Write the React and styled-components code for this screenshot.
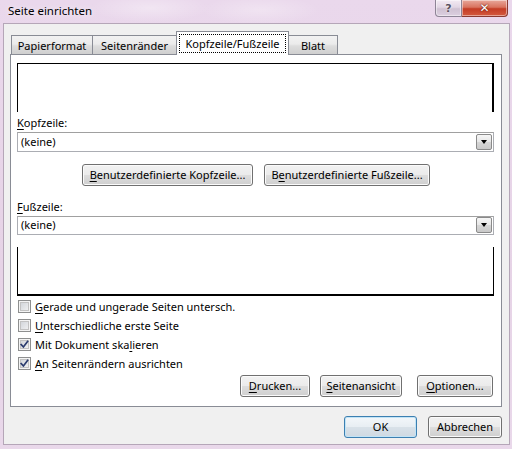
import React from "react";
import styled, { createGlobalStyle } from "styled-components";

const Global = createGlobalStyle`
  html, body { margin: 0; padding: 0; }
  body {
    width: 512px;
    height: 449px;
    overflow: hidden;
    font-family: "Noto Sans", "Open Sans", sans-serif;
    font-size: 11px;
    color: #000;
    background: #e9d7ea;
  }
`;

const Window = styled.div`
  width: 512px;
  height: 449px;
  box-sizing: border-box;
  display: flex;
  flex-direction: column;
  padding: 0 2px 4px 3px;
  background:
    radial-gradient(ellipse 60px 14px at 150px 8px, rgba(255,255,255,0.35), transparent),
    radial-gradient(ellipse 60px 14px at 260px 10px, rgba(255,255,255,0.3), transparent),
    linear-gradient(to bottom, #ead8ec 0%, #e6d3e6 60%, #e9d8ea 100%);
`;

const TitleBar = styled.div`
  height: 23px;
  display: flex;
  align-items: flex-start;
  justify-content: space-between;
  flex-shrink: 0;
`;

const Title = styled.div`
  font-size: 11.5px;
  padding: 2px 0 0 5px;
  line-height: 17px;
  color: #000;
  text-shadow: 0 0 6px rgba(255,255,255,0.9);
`;

const CaptionButtons = styled.div`
  display: flex;
  margin-right: 2px;
`;

const CaptionBtn = styled.div`
  width: ${(p) => p.$w}px;
  height: 17px;
  box-sizing: border-box;
  display: flex;
  align-items: center;
  justify-content: center;
  border: 1px solid ${(p) => (p.$close ? "#8a3a32" : "#8e8496")};
  border-top: none;
  border-left: ${(p) => (p.$close ? "none" : undefined)};
  border-radius: ${(p) => (p.$close ? "0 0 4px 0" : "0 0 0 4px")};
  background: ${(p) =>
    p.$close
      ? "linear-gradient(to bottom, #e8a89b 0%, #d9735f 45%, #c43c25 55%, #d45a3f 100%)"
      : "linear-gradient(to bottom, #f3eaf3 0%, #e2d6e4 45%, #cfc1d2 55%, #dccfe0 100%)"};
  box-shadow: inset 0 0 0 1px rgba(255,255,255,0.45);
  color: ${(p) => (p.$close ? "#fff" : "#5a5160")};
  font-family: "DejaVu Sans", sans-serif;
  font-weight: bold;
  font-size: ${(p) => (p.$close ? "12px" : "11px")};
  text-shadow: ${(p) => (p.$close ? "0 0 2px #6b1a10, 0 0 1px #6b1a10" : "0 0 2px #fff")};
`;

const Client = styled.div`
  flex: 1;
  box-sizing: border-box;
  border: 1px solid #b5a6b8;
  background: #f0f0f0;
  padding: 7px 7px 0 6px;
  display: flex;
  flex-direction: column;
`;

const TabStrip = styled.div`
  height: 23px;
  display: flex;
  align-items: flex-end;
  padding-left: 1px;
`;

const Tab = styled.div`
  width: ${(p) => p.$w}px;
  box-sizing: border-box;
  height: ${(p) => (p.$active ? 24 : 19)}px;
  margin-bottom: ${(p) => (p.$active ? "-1px" : "0")};
  border: 1px solid #898c95;
  border-bottom: none;
  border-left: ${(p) => (p.$first || p.$active ? "1px solid #898c95" : "none")};
  border-right: ${(p) => (p.$beforeActive ? "none" : "1px solid #898c95")};
  background: ${(p) =>
    p.$active ? "#fff" : "linear-gradient(to bottom, #f2f2f2 0%, #ebebeb 45%, #dddddd 55%, #cfcfcf 100%)"};
  display: flex;
  align-items: center;
  justify-content: center;
  position: relative;
  z-index: ${(p) => (p.$active ? 2 : 1)};
  padding: ${(p) => (p.$active ? "2px 2px 2px" : "0")};
  line-height: 15px;
`;

const FocusRect = styled.span`
  flex: 1;
  align-self: stretch;
  display: flex;
  align-items: center;
  justify-content: center;
  border: 1px dotted #000;
`;

const Panel = styled.div`
  height: 353px;
  box-sizing: border-box;
  border: 1px solid #898c95;
  background: #fff;
  padding: 0 7px 9px 6px;
  display: flex;
  flex-direction: column;
`;

const PreviewBox = styled.div`
  height: 49px;
  box-sizing: border-box;
  margin-top: ${(p) => p.$mt}px;
  border-style: solid;
  border-color: #000;
  border-width: ${(p) => (p.$footer ? "0 1px 2px 1px" : "1px 2px 0 1px")};
`;

const FieldLabel = styled.div`
  height: 16px;
  line-height: 16px;
  margin-top: ${(p) => p.$mt}px;
`;

const Select = styled.div`
  height: 20px;
  margin-top: 1px;
  box-sizing: border-box;
  border: 1px solid #abadb3;
  border-top-color: #a0a0a0;
  display: flex;
  align-items: center;
  padding: 0 1px 0 3px;
  background: #fff;
`;

const SelectText = styled.span`
  flex: 1;
  line-height: 16px;
`;

const DropButton = styled.div`
  width: 16px;
  height: 16px;
  box-sizing: border-box;
  border: 1px solid #8a8a8a;
  border-radius: 2px;
  background: linear-gradient(to bottom, #f6f6f6 0%, #e6e6e6 50%, #d6d6d6 51%, #c9c9c9 100%);
  display: flex;
  align-items: center;
  justify-content: center;
`;

const Arrow = styled.span`
  width: 0;
  height: 0;
  border-left: 3.5px solid transparent;
  border-right: 3.5px solid transparent;
  border-top: 4px solid #000;
`;

const CenterRow = styled.div`
  display: flex;
  justify-content: center;
  gap: 11px;
  margin-top: 12px;
  padding-left: 1px;
`;

const RightRow = styled.div`
  display: flex;
  justify-content: flex-end;
  margin-top: ${(p) => p.$mt}px;
  padding-right: ${(p) => p.$pr || 0}px;
`;

const Button = styled.div`
  width: ${(p) => p.$w}px;
  margin-left: ${(p) => p.$ml || 0}px;
  height: 22px;
  box-sizing: border-box;
  border: 1px solid ${(p) => (p.$default ? "#3c7fb1" : "#707070")};
  border-radius: 3px;
  background: ${(p) =>
    p.$default
      ? "linear-gradient(to bottom, #f3f7fa 0%, #e8eef3 48%, #d8e1e8 52%, #cfd9e2 100%)"
      : "linear-gradient(to bottom, #f2f2f2 0%, #ebebeb 48%, #dddddd 52%, #cfcfcf 100%)"};
  box-shadow: inset 0 0 0 1px ${(p) => (p.$default ? "#c2e4f6" : "#fbfbfb")};
  display: flex;
  align-items: center;
  justify-content: center;
  line-height: 16px;
  white-space: nowrap;
`;

const CheckList = styled.div`
  margin-top: 1px;
  display: flex;
  flex-direction: column;
`;

const CheckRow = styled.div`
  height: 19px;
  display: flex;
  align-items: center;
  gap: 4px;
  padding-left: 1px;
`;

const Box = styled.span`
  width: 13px;
  height: 13px;
  box-sizing: border-box;
  border: 1px solid #8e8f8f;
  box-shadow: inset 0 0 0 1px #f4f4f4, inset 0 0 0 2px #c2c2c2;
  background-image: linear-gradient(135deg, #cbcfd5 0%, #f6f6f6 100%);
  display: flex;
  align-items: center;
  justify-content: center;
  flex-shrink: 0;
`;

const U = styled.span`
  text-decoration: underline;
  text-underline-offset: 2px;
`;

function Check({ checked, children }) {
  return (
    <CheckRow>
      <Box>
        {checked && (
          <svg width="11" height="11" viewBox="0 0 11 11">
            <path d="M2.2 5.6 L4.4 8 L8.6 2.4" fill="none" stroke="#2a3b6e" strokeWidth="1.7" strokeLinecap="square" />
          </svg>
        )}
      </Box>
      <span>{children}</span>
    </CheckRow>
  );
}

function Combo() {
  return (
    <Select>
      <SelectText>(keine)</SelectText>
      <DropButton>
        <Arrow />
      </DropButton>
    </Select>
  );
}

export default function App() {
  return (
    <>
      <Global />
      <Window>
        <TitleBar>
          <Title>Seite einrichten</Title>
          <CaptionButtons>
            <CaptionBtn $w={27}>?</CaptionBtn>
            <CaptionBtn $w={46} $close>✕</CaptionBtn>
          </CaptionButtons>
        </TitleBar>
        <Client>
          <TabStrip>
            <Tab $w={82} $first>Papierformat</Tab>
            <Tab $w={83} $beforeActive>Seitenränder</Tab>
            <Tab $w={113} $active>
              <FocusRect>Kopfzeile/Fußzeile</FocusRect>
            </Tab>
            <Tab $w={49}>Blatt</Tab>
          </TabStrip>
          <Panel>
            <PreviewBox $mt={8} />
            <FieldLabel $mt={3}>
              <U>K</U>opfzeile:
            </FieldLabel>
            <Combo />
            <CenterRow>
              <Button $w={171}>
                <U>B</U>enutzerdefinierte Kopfzeile...
              </Button>
              <Button $w={166}>
                B<U>e</U>nutzerdefinierte Fußzeile...
              </Button>
            </CenterRow>
            <FieldLabel $mt={13}>
              <U>F</U>ußzeile:
            </FieldLabel>
            <Combo />
            <PreviewBox $mt={12} $footer />
            <CheckList>
              <Check>
                <U>G</U>erade und ungerade Seiten untersch.
              </Check>
              <Check>
                <U>U</U>nterschiedliche erste Seite
              </Check>
              <Check checked>
                Mit Dokument ska<U>l</U>ieren
              </Check>
              <Check checked>
                <U>A</U>n Seitenrändern ausrichten
              </Check>
            </CheckList>
            <RightRow $mt={2} $pr={1}>
              <Button $w={70}>
                <U>D</U>rucken...
              </Button>
              <Button $w={82} $ml={10}>
                <U>S</U>eitenansicht
              </Button>
              <Button $w={76} $ml={15}>
                <U>O</U>ptionen...
              </Button>
            </RightRow>
          </Panel>
          <RightRow $mt={9}>
            <Button $w={73} $default>OK</Button>
            <Button $w={74} $ml={11}>Abbrechen</Button>
          </RightRow>
        </Client>
      </Window>
    </>
  );
}
